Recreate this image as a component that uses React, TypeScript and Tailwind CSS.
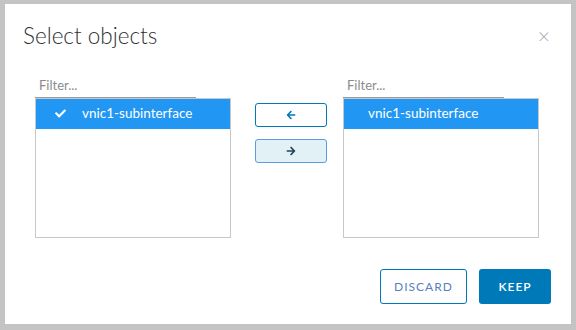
import { FaArrowLeft, FaArrowRight, FaCheck } from "react-icons/fa";

const ITEM = "vnic1-subinterface";

function ListPane({ checked }: { checked?: boolean }) {
  return (
    <div className="flex w-[196px] flex-col">
      <div className="w-[161px] border-b border-[#9a9a9a] px-[4px] pb-[3px] text-[13px] leading-[17px] text-[#8c8c8c]">
        Filter...
      </div>
      <div className="h-[140px] border border-[#c8c8c8]">
        <div className="flex h-[30px] items-center bg-[#2196f3] pb-[2px] text-[13.5px] text-white">
          {checked ? (
            <span className="flex w-[46px] justify-center pl-[2px]">
              <FaCheck size={11} />
            </span>
          ) : (
            <span className="w-[24px]" />
          )}
          <span>{ITEM}</span>
        </div>
      </div>
    </div>
  );
}

export default function App() {
  return (
    <div className="h-[330px] w-[576px] bg-[#c4c4c4] pb-[6px] pl-[5px] pr-[5px] pt-[4px] font-['Lato',sans-serif]">
      <div className="flex h-full flex-col bg-white">
        <div className="flex items-start justify-between pl-[18px] pr-[21px] pt-[18px]">
          <h1 className="text-[22.5px] font-light leading-[28px] text-[#313131]">Select objects</h1>
          <span className="mt-[2px] text-[21px] font-light leading-[24px] text-[#9aa7b3]">×</span>
        </div>
        <div className="mt-[27px] flex items-start pl-[30px]">
          <ListPane checked />
          <div className="flex w-[112px] flex-col gap-[12px] pl-[24px] pt-[26px]">
            <button className="flex h-[24px] w-[72px] items-center justify-center rounded-[3px] border border-[#0079b8] bg-white text-[#0079b8]">
              <FaArrowLeft size={10} />
            </button>
            <button className="flex h-[24px] w-[72px] items-center justify-center rounded-[3px] border border-[#5a9ee0] bg-[#e1f1f6] text-[#23405a]">
              <FaArrowRight size={10} />
            </button>
          </div>
          <ListPane />
        </div>
        <div className="mt-auto flex justify-end gap-[12px] pb-[20px] pr-[20px]">
          <button className="h-[35px] w-[87px] rounded-[3px] border border-[#0079b8] bg-white text-[12px] tracking-[1px] text-[#5a7fc0]">
            DISCARD
          </button>
          <button className="h-[35px] w-[72px] rounded-[3px] bg-[#0079b8] text-[12px] font-semibold tracking-[1px] text-white">
            KEEP
          </button>
        </div>
      </div>
    </div>
  );
}
